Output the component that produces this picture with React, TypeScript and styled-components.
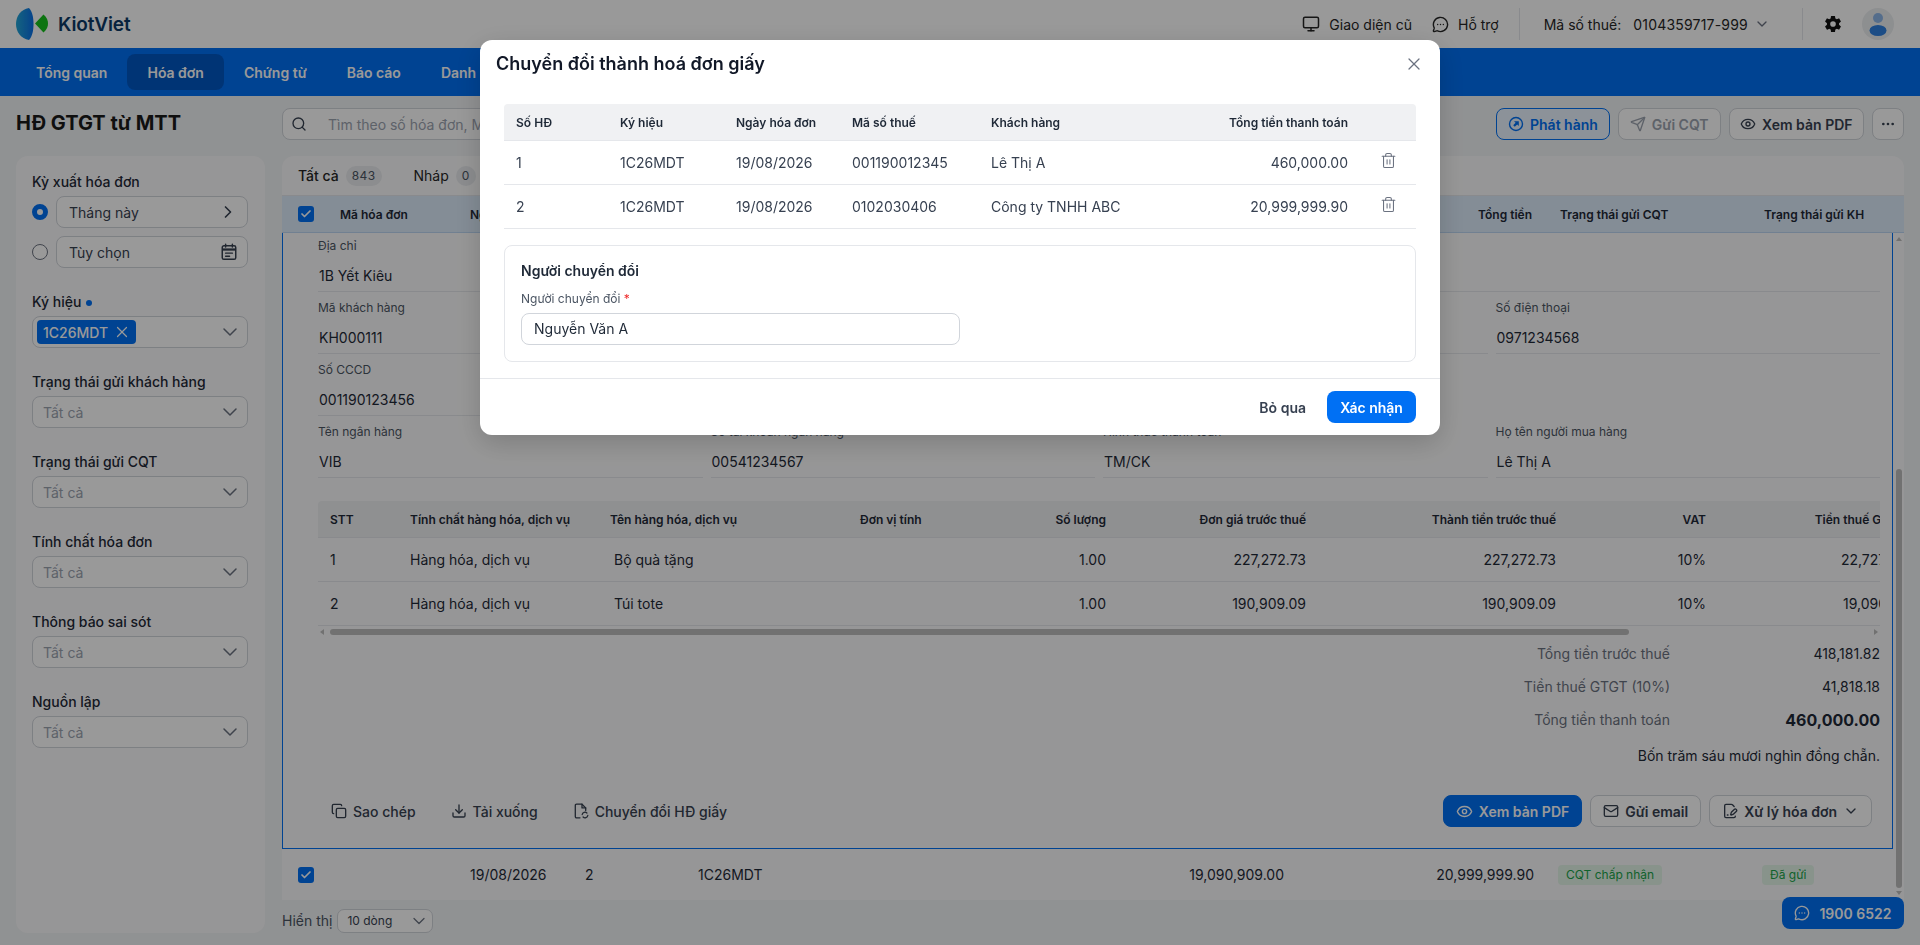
// App.tsx
import React from "react";
import styled, { createGlobalStyle } from "styled-components";
import {
  Monitor,
  MessageCircleMore,
  ChevronDown,
  ChevronRight,
  Search,
  Send,
  Eye,
  Ellipsis,
  Trash2,
  X,
  Check,
  Copy,
  Download,
  Mail,
  FilePenLine,
} from "lucide-react";
import { IoSettingsSharp } from "react-icons/io5";

const GlobalStyle = createGlobalStyle`
  html, body {
    margin: 0;
    padding: 0;
    height: 100%;
    overflow: hidden;
  }
  body {
    font-family: Inter, "Noto Sans", "Liberation Sans", sans-serif;
    font-size: 14px;
    color: #1f2937;
    background: #f1f3f5;
  }
  * { box-sizing: border-box; }
`;

const Page = styled.div`
  width: 1920px;
  height: 945px;
  display: flex;
  flex-direction: column;
  overflow: hidden;
`;

/* ---------- header ---------- */

const Header = styled.header`
  height: 48px;
  flex: none;
  background: #fff;
  display: flex;
  align-items: center;
  padding: 0 26px 0 16px;
`;

const Brand = styled.div`
  display: flex;
  align-items: center;
  gap: 10px;
  font-size: 19px;
  font-weight: 600;
  color: #0d3a66;
  letter-spacing: -0.1px;
`;

const HeaderRight = styled.div`
  margin-left: auto;
  display: flex;
  align-items: center;
  color: #262626;
`;

const HeaderLink = styled.div`
  display: flex;
  align-items: center;
  gap: 9px;
  margin-right: 20px;
`;

const HeaderDivider = styled.div`
  width: 1px;
  height: 32px;
  background: #e5e7eb;
`;

const TaxCode = styled.div`
  display: flex;
  align-items: center;
  margin: 0 32px 0 24px;
  gap: 12px;
`;

const TaxNumber = styled.span`
  letter-spacing: 0.2px;
  margin-right: -6px;
`;

const GearWrap = styled.div`
  display: flex;
  margin: 0 20px 0 21px;
  color: #111;
`;

const Avatar = styled.div`
  width: 32px;
  height: 32px;
  border-radius: 50%;
  background: #eceef1;
  display: flex;
  align-items: center;
  justify-content: center;
`;

/* ---------- nav ---------- */

const Nav = styled.nav`
  height: 48px;
  flex: none;
  background: #0070f4;
  display: flex;
  align-items: center;
  padding: 0 16px;
`;

const NavItem = styled.div<{ $active?: boolean }>`
  height: 36px;
  padding: 0 20px;
  display: flex;
  align-items: center;
  border-radius: 8px;
  color: #fff;
  font-weight: 600;
  background: ${({ $active }) => ($active ? "#0058c4" : "transparent")};
`;

/* ---------- body ---------- */

const Body = styled.div`
  flex: 1;
  min-height: 0;
  display: grid;
  grid-template-columns: 249px 1fr;
  column-gap: 17px;
  padding: 12px 16px 12px;
`;

const SideColumn = styled.aside`
  display: flex;
  flex-direction: column;
  min-height: 0;
`;

const PageTitle = styled.h1`
  margin: 0;
  height: 48px;
  padding-top: 1px;
  font-size: 20px;
  line-height: 28px;
  font-weight: 700;
  color: #1a1a1a;
`;

const Sidebar = styled.div`
  flex: 1;
  background: #fbfbfc;
  border-radius: 12px;
  padding: 16px 17px 16px 16px;
  display: flex;
  flex-direction: column;
  gap: 24px;
`;

const FilterGroup = styled.div`
  display: flex;
  flex-direction: column;
`;

const FilterLabel = styled.div`
  height: 24px;
  line-height: 20px;
  font-weight: 500;
  color: #1f2937;
  display: flex;
  align-items: flex-start;
  gap: 5px;
`;

const Dot = styled.span`
  width: 6px;
  height: 6px;
  margin-top: 8px;
  border-radius: 50%;
  background: #0070f4;
`;

const RadioRow = styled.div`
  display: flex;
  align-items: center;
  gap: 8px;
  & + & {
    margin-top: 8px;
  }
`;

const Radio = styled.span<{ $on?: boolean }>`
  width: 16px;
  height: 16px;
  flex: none;
  border-radius: 50%;
  background: #fff;
  border: ${({ $on }) => ($on ? "5px solid #0070f4" : "1px solid #6b7280")};
`;

const SelectBox = styled.div<{ $grow?: boolean }>`
  height: 32px;
  flex: ${({ $grow }) => ($grow ? 1 : "none")};
  border: 1px solid #d1d5db;
  border-radius: 8px;
  background: #fff;
  display: flex;
  align-items: center;
  justify-content: space-between;
  padding: 0 ${({ $grow }) => ($grow ? "9px" : "5px")} 0 ${({ $grow }) => ($grow ? "12px" : "10px")};
  color: #374151;
`;

const Placeholder = styled.span`
  color: #9ca3af;
`;

const ChipBox = styled(SelectBox)`
  padding-left: 4px;
`;

const Chip = styled.span`
  height: 24px;
  padding: 0 5px 0 6px;
  display: inline-flex;
  align-items: center;
  gap: 5px;
  border-radius: 4px;
  background: #0070f4;
  color: #fff;
  font-weight: 500;
`;

/* ---------- main column ---------- */

const MainColumn = styled.main`
  display: flex;
  flex-direction: column;
  min-width: 0;
  min-height: 0;
`;

const Toolbar = styled.div`
  height: 32px;
  margin-bottom: 16px;
  display: flex;
  align-items: center;
  justify-content: space-between;
`;

const SearchBox = styled.div`
  width: 1150px;
  height: 32px;
  border: 1px solid #d1d5db;
  border-radius: 8px;
  background: #fff;
  display: flex;
  align-items: center;
  gap: 21px;
  padding: 0 8px;
  color: #9ca3af;
`;

const ToolGroup = styled.div`
  display: flex;
  gap: 8px;
`;

const ToolButton = styled.button<{ $tone?: "primary" | "muted" }>`
  height: 32px;
  padding: 0 ${({ $tone }) => ($tone ? "11px" : "10.5px")};
  display: inline-flex;
  align-items: center;
  gap: 6px;
  border-radius: 8px;
  background: ${({ $tone }) => ($tone === "primary" ? "#eaf3ff" : "#fff")};
  border: 1px solid
    ${({ $tone }) => ($tone === "primary" ? "#0070f4" : "#d1d5db")};
  color: ${({ $tone }) =>
    $tone === "primary" ? "#0070f4" : $tone === "muted" ? "#9ca3af" : "#374151"};
  font: 600 14px Inter, sans-serif;
`;

const MoreButton = styled(ToolButton)`
  width: 32px;
  padding: 0;
  justify-content: center;
`;

const Panel = styled.section`
  flex: none;
  height: 744px;
  background: #fbfbfc;
  border-radius: 12px 12px 0 0;
  display: flex;
  flex-direction: column;
  overflow: hidden;
`;

const Tabs = styled.div`
  height: 40px;
  flex: none;
  display: flex;
  align-items: center;
  padding-left: 16px;
  gap: 32px;
  border-bottom: 1px solid #e5e7eb;
`;

const Tab = styled.div<{ $active?: boolean }>`
  display: flex;
  align-items: center;
  gap: 7px;
  font-weight: ${({ $active }) => ($active ? 500 : 400)};
  color: #262626;
`;

const TabCount = styled.span`
  height: 20px;
  min-width: 20px;
  padding: 0 6px;
  border-radius: 10px;
  background: #e9ebee;
  color: #4b5563;
  font-size: 12px;
  font-weight: 400;
  letter-spacing: 0.4px;
  display: flex;
  align-items: center;
  justify-content: center;
`;

const InvoiceHead = styled.div`
  height: 37px;
  flex: none;
  display: grid;
  grid-template-columns: 58px 118px 115px 113px 414px 196px 248px 204px 1fr;
  align-items: center;
  background: #dcebfa;
  border-bottom: 1px solid #bcd6f2;
  font-size: 12px;
  font-weight: 600;
  color: #1f2937;
`;

const HeadCell = styled.div<{ $right?: boolean; $pad?: boolean }>`
  padding: ${({ $pad }) => ($pad ? "0 12px" : "0")};
  text-align: ${({ $right }) => ($right ? "right" : "left")};
  white-space: nowrap;
`;

const StatusHeadCell = styled(HeadCell)`
  padding-left: 16px;
`;

const CheckBox = styled.span`
  width: 16px;
  height: 16px;
  margin-left: 16px;
  border-radius: 3px;
  background: #0070f4;
  color: #fff;
  display: flex;
  align-items: center;
  justify-content: center;
`;

const ScrollArea = styled.div`
  flex: 1;
  min-height: 0;
  display: flex;
`;

const ScrollContent = styled.div`
  flex: 1;
  min-width: 0;
  display: flex;
  flex-direction: column;
`;

const ScrollRail = styled.div`
  width: 11px;
  flex: none;
  position: relative;
`;

const RailThumb = styled.div`
  position: absolute;
  top: 236px;
  left: 3px;
  width: 6px;
  height: 419px;
  border-radius: 3px;
  background: #bdbdbd;
`;

const RailArrow = styled.div<{ $bottom?: boolean }>`
  position: absolute;
  left: 3px;
  ${({ $bottom }) => ($bottom ? "top: 658px;" : "top: 4px;")}
  width: 0;
  height: 0;
  border-left: 3px solid transparent;
  border-right: 3px solid transparent;
  ${({ $bottom }) =>
    $bottom ? "border-top: 4px solid #bdbdbd;" : "border-bottom: 4px solid #bdbdbd;"}
`;

const Expanded = styled.div`
  height: 616px;
  flex: none;
  border: 1px solid #0070f4;
  border-top: none;
  padding: 5px 12px 0 35px;
  display: flex;
  flex-direction: column;
`;

const FieldGrid = styled.div`
  display: grid;
  grid-template-columns: repeat(4, 1fr);
  gap: 8px;
`;

const Field = styled.div<{ $span?: number; $start?: number }>`
  min-width: 0;
  grid-column: ${({ $start, $span }) =>
    `${$start ?? "auto"} / span ${$span ?? 1}`};
`;

const FieldLabel = styled.div`
  height: 16px;
  margin-bottom: 6px;
  font-size: 12px;
  line-height: 16px;
  color: #4b5563;
`;

const FieldValue = styled.div`
  height: 32px;
  padding-left: 1px;
  line-height: 31px;
  border-bottom: 1px solid #e5e7eb;
  color: #1f2937;
`;

const ItemsWrap = styled.div`
  margin-top: 23px;
  overflow: hidden;
  flex: none;
`;

const itemColumns = "80px 200px 250px 120px 150px 200px 250px 150px 199px";

const ItemsHead = styled.div`
  width: 1600px;
  height: 37px;
  display: grid;
  grid-template-columns: ${itemColumns};
  align-items: center;
  background: #eff0f2;
  border-bottom: 1px solid #e5e7eb;
  border-radius: 4px 4px 0 0;
  font-size: 12px;
  font-weight: 600;
  color: #1f2937;
`;

const ItemsRow = styled.div`
  width: 1600px;
  height: 44px;
  display: grid;
  grid-template-columns: ${itemColumns};
  align-items: center;
  border-bottom: 1px solid #e5e7eb;
  color: #1f2937;
`;

const ItemCell = styled.div<{ $right?: boolean; $indent?: boolean }>`
  padding: 0 12px 0 ${({ $indent }) => ($indent ? "16px" : "12px")};
  text-align: ${({ $right }) => ($right ? "right" : "left")};
  white-space: nowrap;
`;

const HScroll = styled.div`
  height: 11px;
  display: flex;
  align-items: center;
  gap: 6px;
  padding: 0 2px;
`;

const HArrow = styled.span<{ $right?: boolean }>`
  width: 0;
  height: 0;
  border-top: 3px solid transparent;
  border-bottom: 3px solid transparent;
  ${({ $right }) =>
    $right
      ? "border-left: 4px solid #bdbdbd; margin-left: auto;"
      : "border-right: 4px solid #bdbdbd;"}
`;

const HThumb = styled.span`
  width: 1299px;
  height: 6px;
  border-radius: 3px;
  background: #bdbdbd;
`;

const Totals = styled.div`
  display: flex;
  flex-direction: column;
`;

const TotalRow = styled.div`
  height: 33px;
  display: flex;
  align-items: center;
  justify-content: flex-end;
`;

const TotalLabel = styled.span`
  color: #6b7280;
`;

const TotalValue = styled.span<{ $big?: boolean }>`
  width: 210px;
  text-align: right;
  color: #1f2937;
  font-size: ${({ $big }) => ($big ? "16px" : "14px")};
  font-weight: ${({ $big }) => ($big ? 700 : 400)};
`;

const AmountWords = styled.div`
  margin-top: 11px;
  text-align: right;
  color: #1f2937;
`;

const ActionBar = styled.div`
  margin-top: 31px;
  height: 32px;
  padding-left: 13px;
  display: flex;
  align-items: center;
`;

const GhostAction = styled.div`
  display: flex;
  align-items: center;
  gap: 6px;
  margin-right: 35px;
  font-weight: 500;
  color: #374151;
  white-space: nowrap;
`;

const ActionRight = styled.div`
  margin-left: auto;
  margin-right: 8px;
  display: flex;
  gap: 8px;
`;

const ActionButton = styled.button<{ $primary?: boolean }>`
  height: 32px;
  padding: 0 12px;
  display: inline-flex;
  align-items: center;
  gap: 6px;
  border-radius: 8px;
  border: 1px solid ${({ $primary }) => ($primary ? "#0070f4" : "#d1d5db")};
  background: ${({ $primary }) => ($primary ? "#0070f4" : "#fff")};
  color: ${({ $primary }) => ($primary ? "#fff" : "#374151")};
  font: 600 14px Inter, sans-serif;
  white-space: nowrap;
`;

const InvoiceRow = styled.div`
  height: 52px;
  flex: none;
  display: grid;
  grid-template-columns: 58px 118px 115px 113px 414px 196px 250px 204px 1fr;
  align-items: center;
  border-bottom: 1px solid #e5e7eb;
  color: #1f2937;
`;

const StatusTag = styled.span`
  display: inline-block;
  height: 20px;
  padding: 0 8px;
  line-height: 20px;
  border-radius: 4px;
  font-size: 12px;
  background: #e3f5e8;
  color: #1aa34a;
`;

const PageSize = styled.div`
  height: 33px;
  display: flex;
  align-items: center;
  gap: 5px;
  color: #4b5563;
  margin-top: 8px;
`;

const PageSizeBox = styled.div`
  width: 96px;
  height: 24px;
  border: 1px solid #d1d5db;
  border-radius: 7px;
  background: #fff;
  display: flex;
  align-items: center;
  justify-content: space-between;
  padding: 0 3px 0 9px;
  font-size: 12px;
  color: #374151;
`;

const HotlineButton = styled.div`
  position: fixed;
  right: 16px;
  bottom: 16px;
  width: 122px;
  height: 32px;
  border-radius: 8px;
  background: #0070f4;
  color: #fff;
  font-weight: 600;
  display: flex;
  align-items: center;
  justify-content: center;
  gap: 9px;
`;

/* ---------- modal ---------- */

const Overlay = styled.div`
  position: fixed;
  inset: 0;
  background: rgba(0, 0, 0, 0.4);
  display: flex;
  justify-content: center;
  align-items: flex-start;
  padding-top: 40px;
`;

const Modal = styled.div`
  width: 960px;
  height: 395px;
  background: #fff;
  border-radius: 12px;
  box-shadow: 0 8px 28px rgba(0, 0, 0, 0.18);
  display: flex;
  flex-direction: column;
`;

const ModalHeader = styled.div`
  height: 64px;
  flex: none;
  padding: 0 16px;
  display: flex;
  justify-content: space-between;
  align-items: flex-start;
`;

const ModalTitle = styled.h2`
  margin: 12px 0 0;
  font-size: 18px;
  line-height: 24px;
  font-weight: 600;
  color: #111827;
`;

const CloseIcon = styled.span`
  margin-top: 14px;
  color: #6b7280;
  display: flex;
`;

const ModalBody = styled.div`
  flex: 1;
  padding: 0 24px;
  display: flex;
  flex-direction: column;
  gap: 16px;
`;

const convertColumns = "104px 116px 116px 139px 1fr 200px 56px";

const ConvertHead = styled.div`
  height: 37px;
  display: grid;
  grid-template-columns: ${convertColumns};
  align-items: center;
  background: #f0f1f3;
  border-bottom: 1px solid #e5e7eb;
  border-radius: 4px 4px 0 0;
  font-size: 12px;
  font-weight: 600;
  color: #1f2937;
`;

const ConvertRow = styled.div`
  height: 44px;
  display: grid;
  grid-template-columns: ${convertColumns};
  align-items: center;
  border-bottom: 1px solid #e5e7eb;
  color: #374151;
`;

const ConvertCell = styled.div<{ $right?: boolean }>`
  padding: 0 12px;
  text-align: ${({ $right }) => ($right ? "right" : "left")};
  white-space: nowrap;
`;

const TrashCell = styled.div`
  display: flex;
  justify-content: center;
  color: #6b7280;
  margin-top: -4px;
`;

const ConverterCard = styled.div`
  height: 117px;
  border: 1px solid #e5e7eb;
  border-radius: 8px;
  padding: 15px 16px;
`;

const CardTitle = styled.div`
  font-size: 14px;
  line-height: 20px;
  font-weight: 600;
  color: #1f2937;
  margin-bottom: 10px;
`;

const CardLabel = styled.div`
  font-size: 12px;
  line-height: 16px;
  color: #4b5563;
  margin-bottom: 6px;
`;

const Required = styled.span`
  color: #ef2b2b;
`;

const TextInput = styled.div`
  width: 439px;
  height: 32px;
  border: 1px solid #d1d5db;
  border-radius: 8px;
  padding: 0 12px;
  line-height: 30px;
  color: #1f2937;
`;

const ModalFooter = styled.div`
  height: 57px;
  flex: none;
  border-top: 1px solid #e5e7eb;
  padding: 0 24px;
  display: flex;
  align-items: center;
  justify-content: flex-end;
  gap: 21px;
`;

const SkipButton = styled.button`
  border: none;
  background: none;
  padding: 0;
  font: 600 14px Inter, sans-serif;
  color: #374151;
`;

const ConfirmButton = styled.button`
  height: 32px;
  width: 89px;
  border: none;
  border-radius: 8px;
  background: #0070f4;
  color: #fff;
  font: 600 14px Inter, sans-serif;
`;

/* ---------- drawings ---------- */

const KiotLogo = () => (
  <svg width="32" height="32" viewBox="0 0 32 32">
    <defs>
      <linearGradient id="kv-blue" x1="0" y1="0" x2="1" y2="0">
        <stop offset="0" stopColor="#23a6d5" />
        <stop offset="1" stopColor="#0a6fe8" />
      </linearGradient>
    </defs>
    <path
      d="M13 0C5 1.5 0 8 0 16c0 8 5 14.500 13 16 3.500-4 4.500-10 4.500-16S16.500 4 13 0Z"
      fill="url(#kv-blue)"
    />
    <path d="M19 15.500 27.500 6.500C31 9.500 32 12.500 32 15.500s-1 6-4.500 9Z" fill="#17c21d" />
  </svg>
);

const UserGlyph = () => (
  <svg width="20" height="26" viewBox="0 0 20 26">
    <circle cx="10" cy="7" r="5" fill="#8db6e8" />
    <ellipse cx="10" cy="19.500" rx="8.500" ry="5.500" fill="#2f80e0" />
  </svg>
);

const PublishGlyph = () => (
  <svg width="16" height="16" viewBox="0 0 16 16" fill="none">
    <circle cx="8" cy="8" r="6.500" stroke="currentColor" strokeWidth="1.400" />
    <path d="M6 5.200h4.800V10L9.200 8.400 6.800 10.800 5.200 9.200 7.600 6.800Z" fill="currentColor" />
  </svg>
);

const CalendarGlyph = () => (
  <svg width="18" height="18" viewBox="0 0 16 16" fill="none" stroke="#374151" strokeWidth="1.300">
    <rect x="2" y="2.500" width="12" height="12" rx="1.500" />
    <path d="M2 5.800h12" strokeWidth="2" />
    <path d="M5 1v2.500M11 1v2.500M5 9h6M5 11.800h3.500" strokeLinecap="round" />
  </svg>
);

const ConvertGlyph = () => (
  <svg width="16" height="16" viewBox="0 0 16 16" fill="none" stroke="#374151" strokeWidth="1.300" strokeLinecap="round" strokeLinejoin="round">
    <path d="M7 14.800H3.500a1.200 1.200 0 0 1-1.200-1.200V2.400a1.200 1.200 0 0 1 1.200-1.200H9l3.700 3.700V7.500" />
    <path d="M9 1.200v3.700h3.700" />
    <path d="M9.200 11.500a2.800 2.800 0 0 1 4.700-1.500M14.800 12.500a2.800 2.800 0 0 1-4.700 1.500" />
  </svg>
);

/* ---------- data ---------- */

const navItems = ["Tổng quan", "Hóa đơn", "Chứng từ", "Báo cáo", "Danh mục", "Thiết lập"];

const plainFilters = [
  "Trạng thái gửi khách hàng",
  "Trạng thái gửi CQT",
  "Tính chất hóa đơn",
  "Thông báo sai sót",
  "Nguồn lập",
];

const lineItems = [
  { no: "1", name: "Bộ quà tặng", price: "227,272.73", tax: "22,727.27" },
  { no: "2", name: "Túi tote", price: "190,909.09", tax: "19,090.91" },
];

const convertRows = [
  { no: "1", tax: "001190012345", customer: "Lê Thị A", total: "460,000.00" },
  { no: "2", tax: "0102030406", customer: "Công ty TNHH ABC", total: "20,999,999.90" },
];

const App: React.FC = () => {
  return (
    <Page>
      <GlobalStyle />

      <Header>
        <Brand>
          <KiotLogo />
          KiotViet
        </Brand>
        <HeaderRight>
          <HeaderLink>
            <Monitor size={18} />
            Giao diện cũ
          </HeaderLink>
          <HeaderLink>
            <MessageCircleMore size={17} />
            Hỗ trợ
          </HeaderLink>
          <HeaderDivider />
          <TaxCode>
            <span>Mã số thuế:</span>
            <TaxNumber>0104359717-999</TaxNumber>
            <ChevronDown size={16} color="#6b7280" />
          </TaxCode>
          <HeaderDivider />
          <GearWrap>
            <IoSettingsSharp size={18} />
          </GearWrap>
          <Avatar>
            <UserGlyph />
          </Avatar>
        </HeaderRight>
      </Header>

      <Nav>
        {navItems.map((item) => (
          <NavItem key={item} $active={item === "Hóa đơn"}>
            {item}
          </NavItem>
        ))}
      </Nav>

      <Body>
        <SideColumn>
          <PageTitle>HĐ GTGT từ MTT</PageTitle>
          <Sidebar>
            <FilterGroup>
              <FilterLabel>Kỳ xuất hóa đơn</FilterLabel>
              <RadioRow>
                <Radio $on />
                <SelectBox $grow>
                  Tháng này
                  <ChevronRight size={20} color="#374151" />
                </SelectBox>
              </RadioRow>
              <RadioRow>
                <Radio />
                <SelectBox $grow>
                  Tùy chọn
                  <CalendarGlyph />
                </SelectBox>
              </RadioRow>
            </FilterGroup>

            <FilterGroup>
              <FilterLabel>
                Ký hiệu
                <Dot />
              </FilterLabel>
              <ChipBox>
                <Chip>
                  1C26MDT
                  <X size={18} strokeWidth={1.6} />
                </Chip>
                <ChevronDown size={24} strokeWidth={1.5} color="#6b7280" />
              </ChipBox>
            </FilterGroup>

            {plainFilters.map((label) => (
              <FilterGroup key={label}>
                <FilterLabel>{label}</FilterLabel>
                <SelectBox>
                  <Placeholder>Tất cả</Placeholder>
                  <ChevronDown size={24} strokeWidth={1.5} color="#6b7280" />
                </SelectBox>
              </FilterGroup>
            ))}
          </Sidebar>
        </SideColumn>

        <MainColumn>
          <Toolbar>
            <SearchBox>
              <Search size={16} color="#374151" />
              Tìm theo số hóa đơn, Mã hóa đơn, Mã số thuế, Tên khách hàng
            </SearchBox>
            <ToolGroup>
              <ToolButton $tone="primary">
                <PublishGlyph />
                Phát hành
              </ToolButton>
              <ToolButton $tone="muted">
                <Send size={16} />
                Gửi CQT
              </ToolButton>
              <ToolButton>
                <Eye size={16} />
                Xem bản PDF
              </ToolButton>
              <MoreButton>
                <Ellipsis size={16} />
              </MoreButton>
            </ToolGroup>
          </Toolbar>

          <Panel>
            <Tabs>
              <Tab $active>
                Tất cả <TabCount>843</TabCount>
              </Tab>
              <Tab>
                Nháp <TabCount>0</TabCount>
              </Tab>
            </Tabs>

            <InvoiceHead>
              <CheckBox>
                <Check size={12} strokeWidth={3.5} />
              </CheckBox>
              <HeadCell>Mã hóa đơn</HeadCell>
              <HeadCell $pad>Ngày hóa đơn</HeadCell>
              <HeadCell $pad>Số HĐ</HeadCell>
              <HeadCell $pad>Ký hiệu</HeadCell>
              <HeadCell $pad $right>Tiền trước thuế</HeadCell>
              <HeadCell $pad $right>Tổng tiền</HeadCell>
              <StatusHeadCell $pad>Trạng thái gửi CQT</StatusHeadCell>
              <StatusHeadCell $pad>Trạng thái gửi KH</StatusHeadCell>
            </InvoiceHead>

            <ScrollArea>
              <ScrollContent>
                <Expanded>
                  <FieldGrid>
                    <Field $span={4}>
                      <FieldLabel>Địa chỉ</FieldLabel>
                      <FieldValue>1B Yết Kiêu</FieldValue>
                    </Field>
                    <Field>
                      <FieldLabel>Mã khách hàng</FieldLabel>
                      <FieldValue>KH000111</FieldValue>
                    </Field>
                    <Field>
                      <FieldLabel>Email</FieldLabel>
                      <FieldValue />
                    </Field>
                    <Field>
                      <FieldLabel>Tên đơn vị</FieldLabel>
                      <FieldValue />
                    </Field>
                    <Field>
                      <FieldLabel>Số điện thoại</FieldLabel>
                      <FieldValue>0971234568</FieldValue>
                    </Field>
                    <Field>
                      <FieldLabel>Số CCCD</FieldLabel>
                      <FieldValue>001190123456</FieldValue>
                    </Field>
                    <Field $start={1}>
                      <FieldLabel>Tên ngân hàng</FieldLabel>
                      <FieldValue>VIB</FieldValue>
                    </Field>
                    <Field>
                      <FieldLabel>Số tài khoản ngân hàng</FieldLabel>
                      <FieldValue>00541234567</FieldValue>
                    </Field>
                    <Field>
                      <FieldLabel>Hình thức thanh toán</FieldLabel>
                      <FieldValue>TM/CK</FieldValue>
                    </Field>
                    <Field>
                      <FieldLabel>Họ tên người mua hàng</FieldLabel>
                      <FieldValue>Lê Thị A</FieldValue>
                    </Field>
                  </FieldGrid>

                  <ItemsWrap>
                    <ItemsHead>
                      <ItemCell>STT</ItemCell>
                      <ItemCell>Tính chất hàng hóa, dịch vụ</ItemCell>
                      <ItemCell>Tên hàng hóa, dịch vụ</ItemCell>
                      <ItemCell>Đơn vị tính</ItemCell>
                      <ItemCell $right>Số lượng</ItemCell>
                      <ItemCell $right>Đơn giá trước thuế</ItemCell>
                      <ItemCell $right>Thành tiền trước thuế</ItemCell>
                      <ItemCell $right>VAT</ItemCell>
                      <ItemCell $right>Tiền thuế GTGT</ItemCell>
                    </ItemsHead>
                    {lineItems.map((line) => (
                      <ItemsRow key={line.no}>
                        <ItemCell>{line.no}</ItemCell>
                        <ItemCell>Hàng hóa, dịch vụ</ItemCell>
                        <ItemCell $indent>{line.name}</ItemCell>
                        <ItemCell />
                        <ItemCell $right>1.00</ItemCell>
                        <ItemCell $right>{line.price}</ItemCell>
                        <ItemCell $right>{line.price}</ItemCell>
                        <ItemCell $right>10%</ItemCell>
                        <ItemCell $right>{line.tax}</ItemCell>
                      </ItemsRow>
                    ))}
                  </ItemsWrap>
                  <HScroll>
                    <HArrow />
                    <HThumb />
                    <HArrow $right />
                  </HScroll>

                  <Totals>
                    <TotalRow>
                      <TotalLabel>Tổng tiền trước thuế</TotalLabel>
                      <TotalValue>418,181.82</TotalValue>
                    </TotalRow>
                    <TotalRow>
                      <TotalLabel>Tiền thuế GTGT (10%)</TotalLabel>
                      <TotalValue>41,818.18</TotalValue>
                    </TotalRow>
                    <TotalRow>
                      <TotalLabel>Tổng tiền thanh toán</TotalLabel>
                      <TotalValue $big>460,000.00</TotalValue>
                    </TotalRow>
                  </Totals>
                  <AmountWords>Bốn trăm sáu mươi nghìn đồng chẵn.</AmountWords>

                  <ActionBar>
                    <GhostAction>
                      <Copy size={16} />
                      Sao chép
                    </GhostAction>
                    <GhostAction>
                      <Download size={16} />
                      Tải xuống
                    </GhostAction>
                    <GhostAction>
                      <ConvertGlyph />
                      Chuyển đổi HĐ giấy
                    </GhostAction>
                    <ActionRight>
                      <ActionButton $primary>
                        <Eye size={17} />
                        Xem bản PDF
                      </ActionButton>
                      <ActionButton>
                        <Mail size={16} />
                        Gửi email
                      </ActionButton>
                      <ActionButton>
                        <FilePenLine size={16} />
                        Xử lý hóa đơn
                        <ChevronDown size={16} />
                      </ActionButton>
                    </ActionRight>
                  </ActionBar>
                </Expanded>

                <InvoiceRow>
                  <CheckBox>
                    <Check size={12} strokeWidth={3.5} />
                  </CheckBox>
                  <HeadCell />
                  <HeadCell $pad>19/08/2026</HeadCell>
                  <HeadCell $pad>2</HeadCell>
                  <HeadCell $pad>1C26MDT</HeadCell>
                  <HeadCell $pad $right>19,090,909.00</HeadCell>
                  <HeadCell $pad $right>20,999,999.90</HeadCell>
                  <HeadCell $pad>
                    <StatusTag>CQT chấp nhận</StatusTag>
                  </HeadCell>
                  <HeadCell $pad>
                    <StatusTag>Đã gửi</StatusTag>
                  </HeadCell>
                </InvoiceRow>
              </ScrollContent>

              <ScrollRail>
                <RailArrow />
                <RailThumb />
                <RailArrow $bottom />
              </ScrollRail>
            </ScrollArea>
          </Panel>

          <PageSize>
            Hiển thị
            <PageSizeBox>
              10 dòng
              <ChevronDown size={20} strokeWidth={1.5} color="#6b7280" />
            </PageSizeBox>
          </PageSize>
        </MainColumn>
      </Body>

      <HotlineButton>
        <MessageCircleMore size={16} />
        1900 6522
      </HotlineButton>

      <Overlay>
        <Modal>
          <ModalHeader>
            <ModalTitle>Chuyển đổi thành hoá đơn giấy</ModalTitle>
            <CloseIcon>
              <X size={20} strokeWidth={1.5} />
            </CloseIcon>
          </ModalHeader>
          <ModalBody>
            <div>
              <ConvertHead>
                <ConvertCell>Số HĐ</ConvertCell>
                <ConvertCell>Ký hiệu</ConvertCell>
                <ConvertCell>Ngày hóa đơn</ConvertCell>
                <ConvertCell>Mã số thuế</ConvertCell>
                <ConvertCell>Khách hàng</ConvertCell>
                <ConvertCell $right>Tổng tiền thanh toán</ConvertCell>
                <ConvertCell />
              </ConvertHead>
              {convertRows.map((row) => (
                <ConvertRow key={row.no}>
                  <ConvertCell>{row.no}</ConvertCell>
                  <ConvertCell>1C26MDT</ConvertCell>
                  <ConvertCell>19/08/2026</ConvertCell>
                  <ConvertCell>{row.tax}</ConvertCell>
                  <ConvertCell>{row.customer}</ConvertCell>
                  <ConvertCell $right>{row.total}</ConvertCell>
                  <TrashCell>
                    <Trash2 size={17} strokeWidth={1.5} />
                  </TrashCell>
                </ConvertRow>
              ))}
            </div>
            <ConverterCard>
              <CardTitle>Người chuyển đổi</CardTitle>
              <CardLabel>
                Người chuyển đổi <Required>*</Required>
              </CardLabel>
              <TextInput>Nguyễn Văn A</TextInput>
            </ConverterCard>
          </ModalBody>
          <ModalFooter>
            <SkipButton>Bỏ qua</SkipButton>
            <ConfirmButton>Xác nhận</ConfirmButton>
          </ModalFooter>
        </Modal>
      </Overlay>
    </Page>
  );
};

export default App;
